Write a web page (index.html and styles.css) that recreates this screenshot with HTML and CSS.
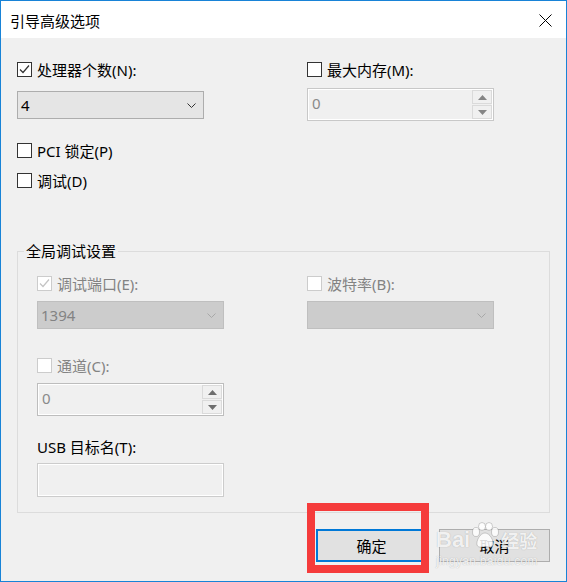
FILE: index.html
```html
<!DOCTYPE html>
<html lang="zh-CN">
<head>
  <meta charset="UTF-8" />
  <title>引导高级选项</title>
  <link rel="stylesheet" href="styles.css">
</head>
<body>
  <div class="dialog">
    <div class="titlebar">
      <span class="title">引导高级选项</span>
      <svg class="close" width="13" height="13" viewBox="0 0 13 13">
        <path d="M0.5 0.5 L12.5 12.5 M12.5 0.5 L0.5 12.5" stroke="#000" stroke-width="1" fill="none"/>
      </svg>
    </div>

    <div class="content">
      <div class="top">
        <div class="col">
          <label class="check">
            <span class="box"><svg width="13" height="13" viewBox="0 0 13 13"><path d="M2 6.5 L5 9.5 L11 2.5" stroke="#333" stroke-width="1.2" fill="none"/></svg></span>
            处理器个数(N):
          </label>
          <div class="combo combo-main">
            <span>4</span>
            <svg width="9" height="5" viewBox="0 0 9 5"><path d="M0.5 0.5 L4.5 4.5 L8.5 0.5" stroke="#333" stroke-width="1" fill="none"/></svg>
          </div>
          <label class="check pci"><span class="box"></span>PCI 锁定(P)</label>
          <label class="check debug"><span class="box"></span>调试(D)</label>
        </div>

        <div class="col">
          <label class="check"><span class="box"></span>最大内存(M):</label>
          <div class="spin spin-mem">
            <span class="value">0</span>
            <div class="arrows">
              <span class="arrow"><svg width="9" height="5" viewBox="0 0 9 5"><path d="M0 5 L4.5 0 L9 5 Z" fill="#858585"/></svg></span>
              <span class="arrow"><svg width="9" height="5" viewBox="0 0 9 5"><path d="M0 0 L4.5 5 L9 0 Z" fill="#858585"/></svg></span>
            </div>
          </div>
        </div>
      </div>

      <fieldset class="group">
        <legend>全局调试设置</legend>
        <div class="group-body">
          <div class="group-grid">
            <div class="col">
              <label class="check disabled">
                <span class="box"><svg width="13" height="13" viewBox="0 0 13 13"><path d="M2 6.5 L5 9.5 L11 2.5" stroke="#c4c4c4" stroke-width="1.2" fill="none"/></svg></span>
                调试端口(E):
              </label>
              <div class="combo combo-off">
                <span>1394</span>
                <svg width="9" height="5" viewBox="0 0 9 5"><path d="M0.5 0.5 L4.5 4.5 L8.5 0.5" stroke="#a8a8a8" stroke-width="1" fill="none"/></svg>
              </div>
              <label class="check disabled channel"><span class="box"></span>通道(C):</label>
              <div class="spin spin-channel">
                <span class="value">0</span>
                <div class="arrows">
                  <span class="arrow"><svg width="9" height="5" viewBox="0 0 9 5"><path d="M0 5 L4.5 0 L9 5 Z" fill="#6e6e6e"/></svg></span>
                  <span class="arrow"><svg width="9" height="5" viewBox="0 0 9 5"><path d="M0 0 L4.5 5 L9 0 Z" fill="#6e6e6e"/></svg></span>
                </div>
              </div>
            </div>
            <div class="col">
              <label class="check disabled"><span class="box"></span>波特率(B):</label>
              <div class="combo combo-off">
                <span></span>
                <svg width="9" height="5" viewBox="0 0 9 5"><path d="M0.5 0.5 L4.5 4.5 L8.5 0.5" stroke="#a8a8a8" stroke-width="1" fill="none"/></svg>
              </div>
            </div>
          </div>
          <div class="usb-label">USB 目标名(T):</div>
          <div class="textbox"></div>
        </div>
      </fieldset>

      <div class="buttons">
        <button class="btn btn-default">确定</button>
        <button class="btn">取消</button>
      </div>
    </div>

    <div class="highlight"></div>

    <div class="watermark">
      <div class="wm-logo">
        <span>Bai</span>
        <svg width="30" height="27" viewBox="0 0 30 27">
          <g fill="rgba(255,255,255,0.85)" stroke="rgba(120,120,120,0.35)" stroke-width="1">
            <ellipse cx="6" cy="10" rx="3.5" ry="4.5"/>
            <ellipse cx="12" cy="4.5" rx="3.5" ry="4"/>
            <ellipse cx="19" cy="4.5" rx="3.5" ry="4"/>
            <ellipse cx="25" cy="10" rx="3.5" ry="4.5"/>
            <path d="M15 11 C10 11 6 19 7 23 C8 26 12 25 15 24.5 C18 25 22 26 23 23 C24 19 20 11 15 11 Z"/>
          </g>
        </svg>
        <span class="wm-cn">经验</span>
      </div>
      <div class="wm-url">jingyan.baidu.com</div>
    </div>
  </div>
</body>
</html>
```

FILE: styles.css
```css
body {
  margin: 0;
  background-color: #f0f0f0;
  font-family: 'Noto Sans', 'Noto Sans CJK SC', sans-serif;
}

.dialog {
  position: relative;
  width: 567px;
  height: 582px;
  box-sizing: border-box;
  border: 1px solid #1883d7;
  background-color: #f0f0f0;
  overflow: hidden;
}

.titlebar {
  height: 37px;
  background-color: #fff;
  display: flex;
  align-items: center;
  justify-content: space-between;
  padding: 0 14px 0 9px;
}

.title {
  font-size: 15px;
  color: #000;
  margin-top: 1px;
}

.close {
  margin-top: 1px;
}

.content {
  padding: 0 16px;
}

.top {
  display: grid;
  grid-template-columns: 187px 187px;
  column-gap: 103px;
  padding-top: 24px;
}

.col {
  display: flex;
  flex-direction: column;
}

.check {
  display: flex;
  align-items: center;
  gap: 5px;
  height: 15px;
  font-size: 15px;
  color: #000;
  white-space: nowrap;
}

.box {
  width: 15px;
  height: 15px;
  box-sizing: border-box;
  border: 1px solid #333;
  background-color: #fff;
  display: flex;
  align-items: center;
  justify-content: center;
  flex-shrink: 0;
}

.check.disabled {
  color: #838383;
}

.check.disabled .box {
  border-color: #cccccc;
}

.pci {
  margin-top: 24px;
}

.debug {
  margin-top: 15px;
}

.combo {
  height: 28px;
  box-sizing: border-box;
  display: flex;
  align-items: center;
  justify-content: space-between;
  padding: 0 7px 0 3px;
  font-size: 15px;
}

.combo-main {
  margin-top: 14px;
  background-color: #e5e5e5;
  border: 1px solid #adadad;
  color: #000;
}

.combo-off {
  margin-top: 10px;
  background-color: #cccccc;
  border: 1px solid #bfbfbf;
  color: #838383;
}

.spin {
  height: 33px;
  box-sizing: border-box;
  border: 1px solid #c8c8c8;
  box-shadow: inset 0 0 0 1px #fff;
  display: flex;
  justify-content: space-between;
  padding: 1px 1px 1px 4px;
  font-size: 15px;
  color: #8a8a8a;
}

.spin-mem {
  margin-top: 11px;
}

.spin-channel {
  margin-top: 10px;
  border-color: #bdbdbd;
}

.value {
  line-height: 27px;
}

.arrows {
  display: flex;
  flex-direction: column;
  gap: 1px;
  width: 20px;
}

.arrow {
  flex: 1;
  box-sizing: border-box;
  border: 1px solid #dadada;
  background-color: #f0f0f0;
  display: flex;
  align-items: center;
  justify-content: center;
}

.group {
  margin: 53px 0 0 0;
  padding: 0;
  border: 1px solid #dcdcdc;
  min-width: 0;
}

.group legend {
  margin-left: 6px;
  padding: 0 2px;
  font-size: 15px;
  line-height: 20px;
  color: #000;
}

.group-body {
  padding: 15px 19px 15px 19px;
}

.group-grid {
  display: grid;
  grid-template-columns: 187px 187px;
  column-gap: 83px;
}

.channel {
  margin-top: 29px;
}

.usb-label {
  margin-top: 24px;
  height: 15px;
  line-height: 15px;
  font-size: 15px;
  color: #000;
}

.textbox {
  margin-top: 8px;
  width: 187px;
  height: 34px;
  box-sizing: border-box;
  border: 1px solid #cccccc;
  box-shadow: inset 0 0 0 1px #fff;
}

.buttons {
  display: flex;
  justify-content: flex-end;
  gap: 12px;
  margin-top: 16px;
}

.btn {
  width: 111px;
  height: 33px;
  box-sizing: border-box;
  border: 1px solid #adadad;
  background-color: #e1e1e1;
  font-family: 'Noto Sans CJK SC', sans-serif;
  font-size: 15px;
  color: #000;
  padding: 0;
}

.btn-default {
  border: 2px solid #0078d7;
}

.highlight {
  position: absolute;
  left: 306px;
  top: 502px;
  width: 122px;
  height: 70px;
  box-sizing: border-box;
  border: 8px solid #f53b3b;
}

.watermark {
  position: absolute;
  left: 435px;
  top: 520px;
  color: rgba(255, 255, 255, 0.85);
  text-shadow: 0 0 1px rgba(90, 90, 90, 0.45);
}

.wm-logo {
  display: flex;
  align-items: flex-end;
  height: 30px;
  font-family: 'Liberation Sans', sans-serif;
  font-weight: bold;
  font-size: 22px;
  line-height: 22px;
}

.wm-logo svg {
  margin: 0 1px 2px 0;
}

.wm-cn {
  font-family: 'Noto Sans CJK SC', sans-serif;
  font-size: 18px;
  font-weight: bold;
}

.wm-url {
  font-family: 'Liberation Sans', sans-serif;
  font-size: 12px;
  margin-top: 3px;
  letter-spacing: 0.3px;
}
```
